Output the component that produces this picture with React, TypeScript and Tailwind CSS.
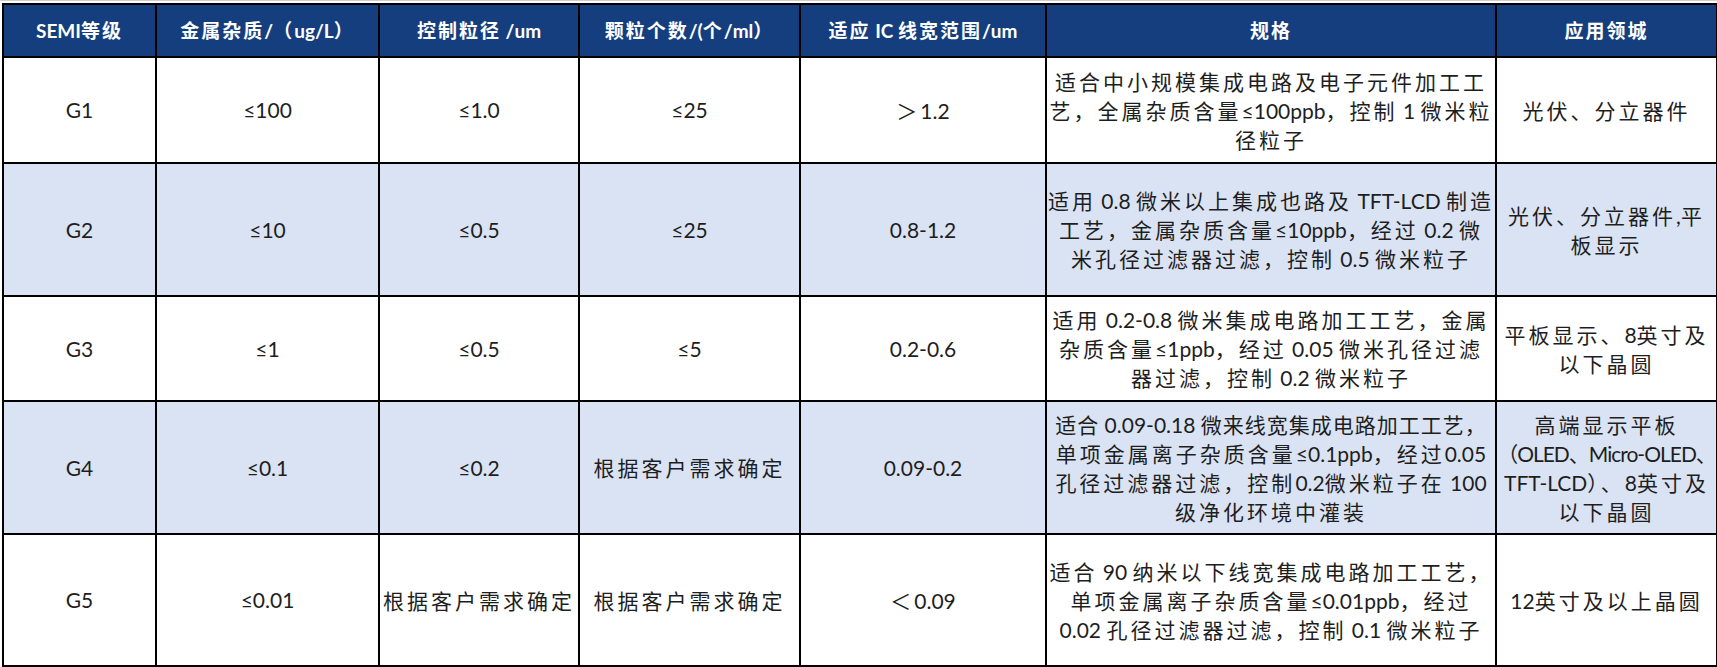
import React from 'react';

const LATIN = '"Lato", "Noto Sans", sans-serif';
const CJK = '"Noto Sans CJK SC", "Noto Sans", sans-serif';

// split a line into CJK / latin runs so only the CJK gets the wide tracking
const isCjk = (ch: string) => /[\u3000-\u303f\u4e00-\u9fff\uff00-\uffef]/.test(ch);

// lines too long for their cell at the normal spacing
const narrowLines = new Set(['（OLED、Micro-OLED、']);
const snugLines = new Set(['适合 0.09-0.18 微来线宽集成电路加工工艺，']);

const Rich = ({ text, head }: { text: string; head?: boolean }) => {
  const runs: { cjk: boolean; s: string }[] = [];
  for (const ch of text) {
    const c = isCjk(ch);
    const last = runs[runs.length - 1];
    if (last && last.cjk === c) last.s += ch;
    else runs.push({ cjk: c, s: ch });
  }
  const narrow = narrowLines.has(text);
  const snug = snugLines.has(text);
  const cjkTrack = narrow
    ? 'tracking-[-1px]'
    : snug
      ? 'tracking-[1px]'
      : head
        ? 'tracking-[2px]'
        : 'tracking-[3px]';
  const latTrack = narrow ? 'tracking-[-1px]' : '';
  return (
    <>
      {runs.map((r, i) =>
        r.cjk ? (
          <span key={i} className={cjkTrack} style={{ fontFamily: CJK }}>
            {r.s}
          </span>
        ) : (
          <span key={i} className={latTrack} style={{ fontFamily: LATIN }}>
            {r.s}
          </span>
        )
      )}
    </>
  );
};

const headers = ['SEMI等级', '金属杂质/（ug/L）', '控制粒径 /um', '颗粒个数/(个/ml）', '适应 IC 线宽范围/um', '规格', '应用领城'];
const widths = ['w-[153px]', 'w-[223px]', 'w-[200px]', 'w-[221px]', 'w-[246px]', 'w-[450px]', 'w-[221px]'];

interface Row {
  h: string;
  shade: boolean;
  cells: string[][];
}

const rows: Row[] = [
  {
    h: 'h-[106px]',
    shade: false,
    cells: [
      ['G1'],
      ['≤100'],
      ['≤1.0'],
      ['≤25'],
      ['＞1.2'],
      ['适合中小规模集成电路及电子元件加工工', '艺，全属杂质含量≤100ppb，控制 1 微米粒', '径粒子'],
      ['光伏、分立器件'],
    ],
  },
  {
    h: 'h-[133px]',
    shade: true,
    cells: [
      ['G2'],
      ['≤10'],
      ['≤0.5'],
      ['≤25'],
      ['0.8-1.2'],
      ['适用 0.8 微米以上集成也路及 TFT-LCD 制造', '工艺，金属杂质含量≤10ppb，经过 0.2 微', '米孔径过滤器过滤，控制 0.5 微米粒子'],
      ['光伏、分立器件,平', '板显示'],
    ],
  },
  {
    h: 'h-[105px]',
    shade: false,
    cells: [
      ['G3'],
      ['≤1'],
      ['≤0.5'],
      ['≤5'],
      ['0.2-0.6'],
      ['适用 0.2-0.8 微米集成电路加工工艺，金属', '杂质含量≤1ppb，经过 0.05 微米孔径过滤', '器过滤，控制 0.2 微米粒子'],
      ['平板显示、8英寸及', '以下晶圆'],
    ],
  },
  {
    h: 'h-[133px]',
    shade: true,
    cells: [
      ['G4'],
      ['≤0.1'],
      ['≤0.2'],
      ['根据客户需求确定'],
      ['0.09-0.2'],
      ['适合 0.09-0.18 微来线宽集成电路加工工艺，', '单项金属离子杂质含量≤0.1ppb，经过0.05', '孔径过滤器过滤，控制0.2微米粒子在 100', '级净化环境中灌装'],
      ['高端显示平板', '（OLED、Micro-OLED、', 'TFT-LCD）、8英寸及', '以下晶圆'],
    ],
  },
  {
    h: 'h-[132px]',
    shade: false,
    cells: [
      ['G5'],
      ['≤0.01'],
      ['根据客户需求确定'],
      ['根据客户需求确定'],
      ['＜0.09'],
      ['适合 90 纳米以下线宽集成电路加工工艺，', '单项金属离子杂质含量≤0.01ppb，经过', '0.02 孔径过滤器过滤，控制 0.1 微米粒子'],
      ['12英寸及以上晶圆'],
    ],
  },
];

export default function App() {
  return (
    <div className="w-[1717px] h-[667px] bg-white border-t border-[#cfcfcf] overflow-hidden">
      <table className="mt-[2px] ml-[2px] table-fixed border-collapse w-[1714px] text-[#1e1e1e]">
        <colgroup>
          {widths.map((w, i) => (
            <col key={i} className={w} />
          ))}
        </colgroup>
        <thead>
          <tr className="h-[53px] bg-[#153e7e]">
            {headers.map((t, i) => (
              <th key={i} className="border-2 border-black text-white font-bold text-[19px] leading-none text-center align-middle whitespace-nowrap">
                <Rich text={t} head />
              </th>
            ))}
          </tr>
        </thead>
        <tbody>
          {rows.map((row, ri) => (
            <tr key={ri} className={`${row.h} ${row.shade ? 'bg-[#dae3f3]' : 'bg-white'}`}>
              {row.cells.map((lines, ci) => (
                <td key={ci} className="border-2 border-black text-center align-middle text-[21px] leading-[28px] p-0 overflow-hidden">
                  {lines.map((l, li) => (
                    <div key={li} className="whitespace-nowrap">
                      <Rich text={l} />
                    </div>
                  ))}
                </td>
              ))}
            </tr>
          ))}
        </tbody>
      </table>
    </div>
  );
}
